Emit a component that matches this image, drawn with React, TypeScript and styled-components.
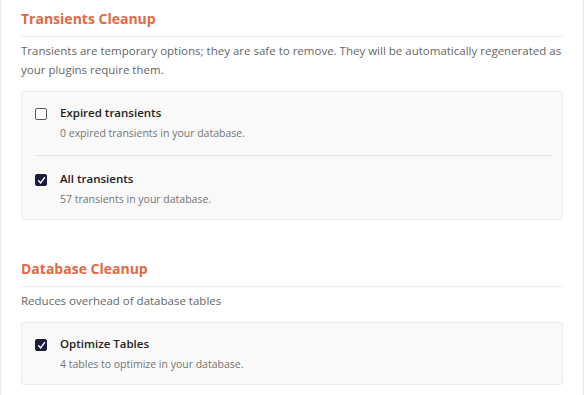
import React from 'react';
import styled, { createGlobalStyle } from 'styled-components';

const GlobalStyle = createGlobalStyle`
    body {
        margin: 0;
        background: #ffffff;
        font-family: 'Open Sans', 'Liberation Sans', sans-serif;
    }
`;

const Page = styled.div`
    width: 584px;
    min-height: 395px;
    box-sizing: border-box;
    border-left: 2px solid #f1f1f1;
    border-right: 1px solid #e6e6e6;
    padding: 0 20px 0 19px;
`;

const Section = styled.section<{ $gap: number }>`
    padding-top: ${(p) => p.$gap}px;
`;

const Heading = styled.h2`
    margin: 0;
    padding-bottom: 7px;
    border-bottom: 1px solid #ececec;
    font-size: 14px;
    line-height: 20px;
    font-weight: 700;
    color: #e06a45;
`;

const Description = styled.p`
    margin: 4px 0 0;
    font-size: 11.5px;
    line-height: 19px;
    color: #666666;
`;

const Card = styled.div`
    margin-top: 12px;
    background: #f9f9f9;
    border: 1px solid #ebebeb;
    border-radius: 3px;
    padding: 0 10px 0 12px;
`;

const Item = styled.label<{ $last?: boolean }>`
    display: grid;
    grid-template-columns: 12px 1fr;
    column-gap: 13px;
    row-gap: 4px;
    padding: 13px 0 ${(p) => (p.$last ? 12 : 14)}px 1px;
    border-bottom: ${(p) => (p.$last ? 'none' : '1px solid #e6e6e6')};
    & + & {
        padding-top: 15px;
    }
`;

const Box = styled.span<{ $checked: boolean }>`
    width: 12px;
    height: 12px;
    margin-top: 3px;
    box-sizing: border-box;
    border-radius: 2px;
    border: 1.5px solid ${(p) => (p.$checked ? '#1c1a3d' : '#5a5a5a')};
    background: ${(p) => (p.$checked ? '#1c1a3d' : '#ffffff')};
    display: flex;
    align-items: center;
    justify-content: center;
`;

const Label = styled.span`
    font-size: 11.5px;
    line-height: 16px;
    font-weight: 600;
    color: #222222;
`;

const Sub = styled.span`
    grid-column: 2;
    font-size: 10.5px;
    line-height: 16px;
    color: #737373;
`;

const Check = () => (
    <svg width='9' height='9' viewBox='0 0 10 10'>
        <path d='M1.8 5.4 L4 7.6 L8.4 1.8' fill='none' stroke='#ffffff' strokeWidth='1.6' strokeLinecap='round' />
    </svg>
);

type Option = { label: string; detail: string; checked: boolean };

const CleanupSection = ({
    title,
    text,
    options,
    gap,
}: {
    title: string;
    text: string;
    options: Option[];
    gap: number;
}) => (
    <Section $gap={gap}>
        <Heading>{title}</Heading>
        <Description>{text}</Description>
        <Card>
            {options.map((o, i) => (
                <Item key={o.label} $last={i === options.length - 1}>
                    <Box $checked={o.checked}>{o.checked && <Check />}</Box>
                    <Label>{o.label}</Label>
                    <Sub>{o.detail}</Sub>
                </Item>
            ))}
        </Card>
    </Section>
);

const App = () => (
    <>
        <GlobalStyle />
        <Page>
            <CleanupSection
                gap={9}
                title='Transients Cleanup'
                text='Transients are temporary options; they are safe to remove. They will be automatically regenerated as your plugins require them.'
                options={[
                    { label: 'Expired transients', detail: '0 expired transients in your database.', checked: false },
                    { label: 'All transients', detail: '57 transients in your database.', checked: true },
                ]}
            />
            <CleanupSection
                gap={39}
                title='Database Cleanup'
                text='Reduces overhead of database tables'
                options={[{ label: 'Optimize Tables', detail: '4 tables to optimize in your database.', checked: true }]}
            />
        </Page>
    </>
);

export default App;
